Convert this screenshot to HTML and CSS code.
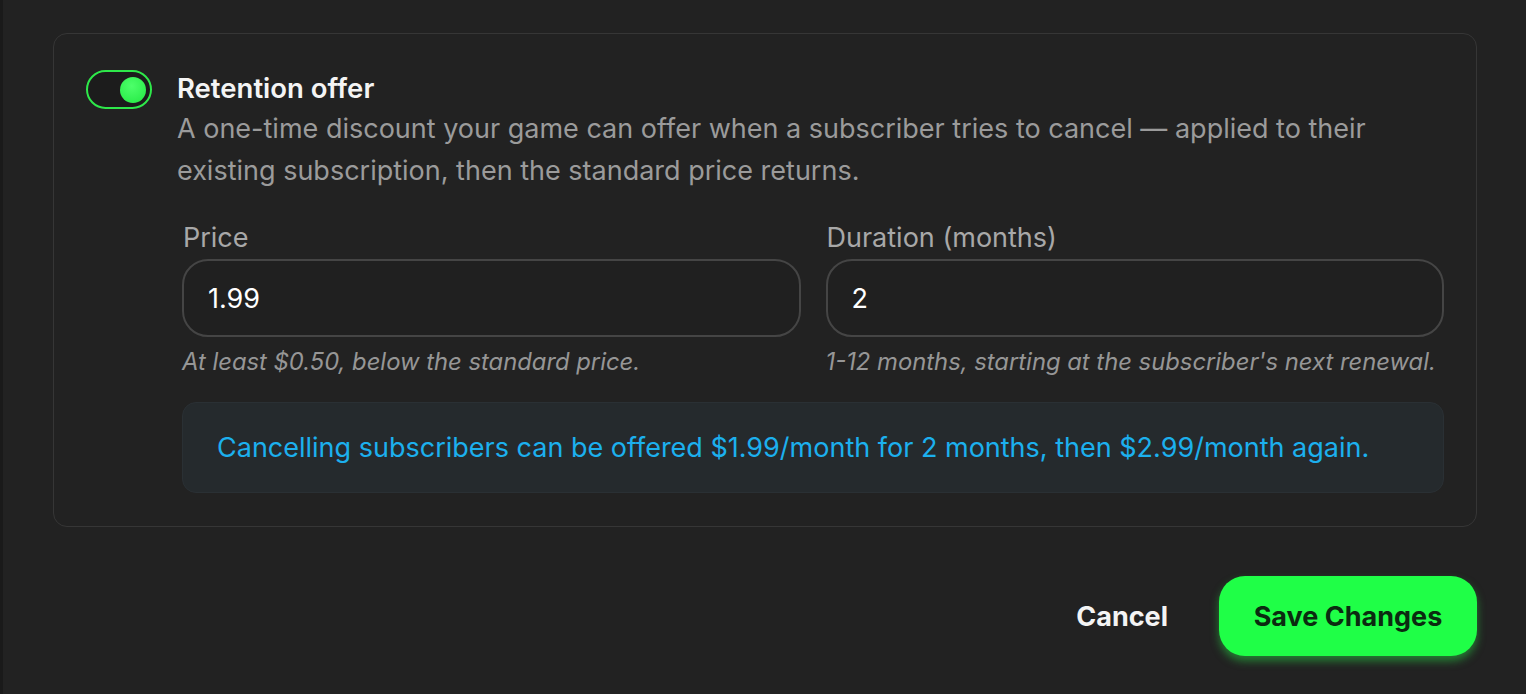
FILE: index.html
```html
<!DOCTYPE html>
<html lang="en">
<head>
    <meta charset="UTF-8">
    <meta name="viewport" content="width=device-width, initial-scale=1.0">
    <title>Retention offer</title>
    <link rel="stylesheet" href="styles.css">
</head>
<body>
    <div class="page">
        <div class="card">
            <div class="toggle on"><span class="knob"></span></div>
            <div class="content">
                <div class="title">Retention offer</div>
                <p class="desc">A one-time discount your game can offer when a subscriber tries to cancel — applied to their existing subscription, then the standard price returns.</p>
                <div class="fields">
                    <div class="field">
                        <label class="label">Price</label>
                        <div class="input">1.99</div>
                        <div class="hint">At least $0.50, below the standard price.</div>
                    </div>
                    <div class="field">
                        <label class="label">Duration (months)</label>
                        <div class="input">2</div>
                        <div class="hint">1-12 months, starting at the subscriber's next renewal.</div>
                    </div>
                </div>
                <div class="summary">Cancelling subscribers can be offered $1.99/month for 2 months, then $2.99/month again.</div>
            </div>
        </div>
        <div class="actions">
            <button class="cancel-button">Cancel</button>
            <button class="save-button">Save Changes</button>
        </div>
    </div>
</body>
</html>
```

FILE: styles.css
```css
body{font-family:Inter,"Noto Sans",sans-serif;margin:0;padding:0;background-color:#222222;color:#f4f4f4;overflow:hidden}
.page{border-left:3px solid #1a1a1a;height:694px;box-sizing:border-box;padding:33px 49px 0 50px}
.card{display:flex;gap:25px;border:1px solid #363636;border-radius:14px;padding:36px 32px 33px 32px}
.toggle{flex:none;position:relative;width:62px;height:35px;border:2px solid #2ee84a;border-radius:20px;background:#1c1c1c}
.toggle .knob{position:absolute;top:5px;left:32px;width:26px;height:26px;border-radius:50%;background:radial-gradient(circle at 45% 35%,#4dff6a,#22e842)}
.content{flex:1;min-width:0}
.title{font-size:27.5px;font-weight:600;line-height:36px;color:#f4f4f4}
.desc{margin:2px 0 0;font-size:27px;line-height:42px;color:#9b9b9b}
.fields{display:grid;grid-template-columns:1fr 1fr;gap:25px;margin-top:31px;padding-left:5px}
.field{min-width:0}
.label{display:block;font-size:27px;line-height:30px;color:#a8a8a8;margin-left:1px}
.input{margin-top:6px;height:74px;box-sizing:content-box;border:2px solid #454545;border-radius:26px;padding:0 24px;display:flex;align-items:center;font-size:27px;color:#ffffff;background:#202020}
.hint{margin-top:11px;font-size:23.8px;line-height:28px;font-style:italic;color:#969696;white-space:nowrap}
.summary{margin:26px 0 0 5px;height:89px;border:1px solid #2a3034;border-radius:14px;background:#252a2d;padding:0 34px;display:flex;align-items:center;font-size:27px;color:#1cb0ee}
.actions{display:flex;justify-content:flex-end;align-items:center;gap:51px;margin-top:49px}
.cancel-button{background:none;border:none;padding:0;font-family:inherit;font-size:27px;font-weight:700;color:#f4f4f4;cursor:pointer}
.save-button{height:80px;width:258px;border:none;border-radius:26px;background:#1fff47;color:#0b2a10;font-family:inherit;font-size:27px;font-weight:700;cursor:pointer;box-shadow:0 5px 9px rgba(40,220,70,0.5)}
```
